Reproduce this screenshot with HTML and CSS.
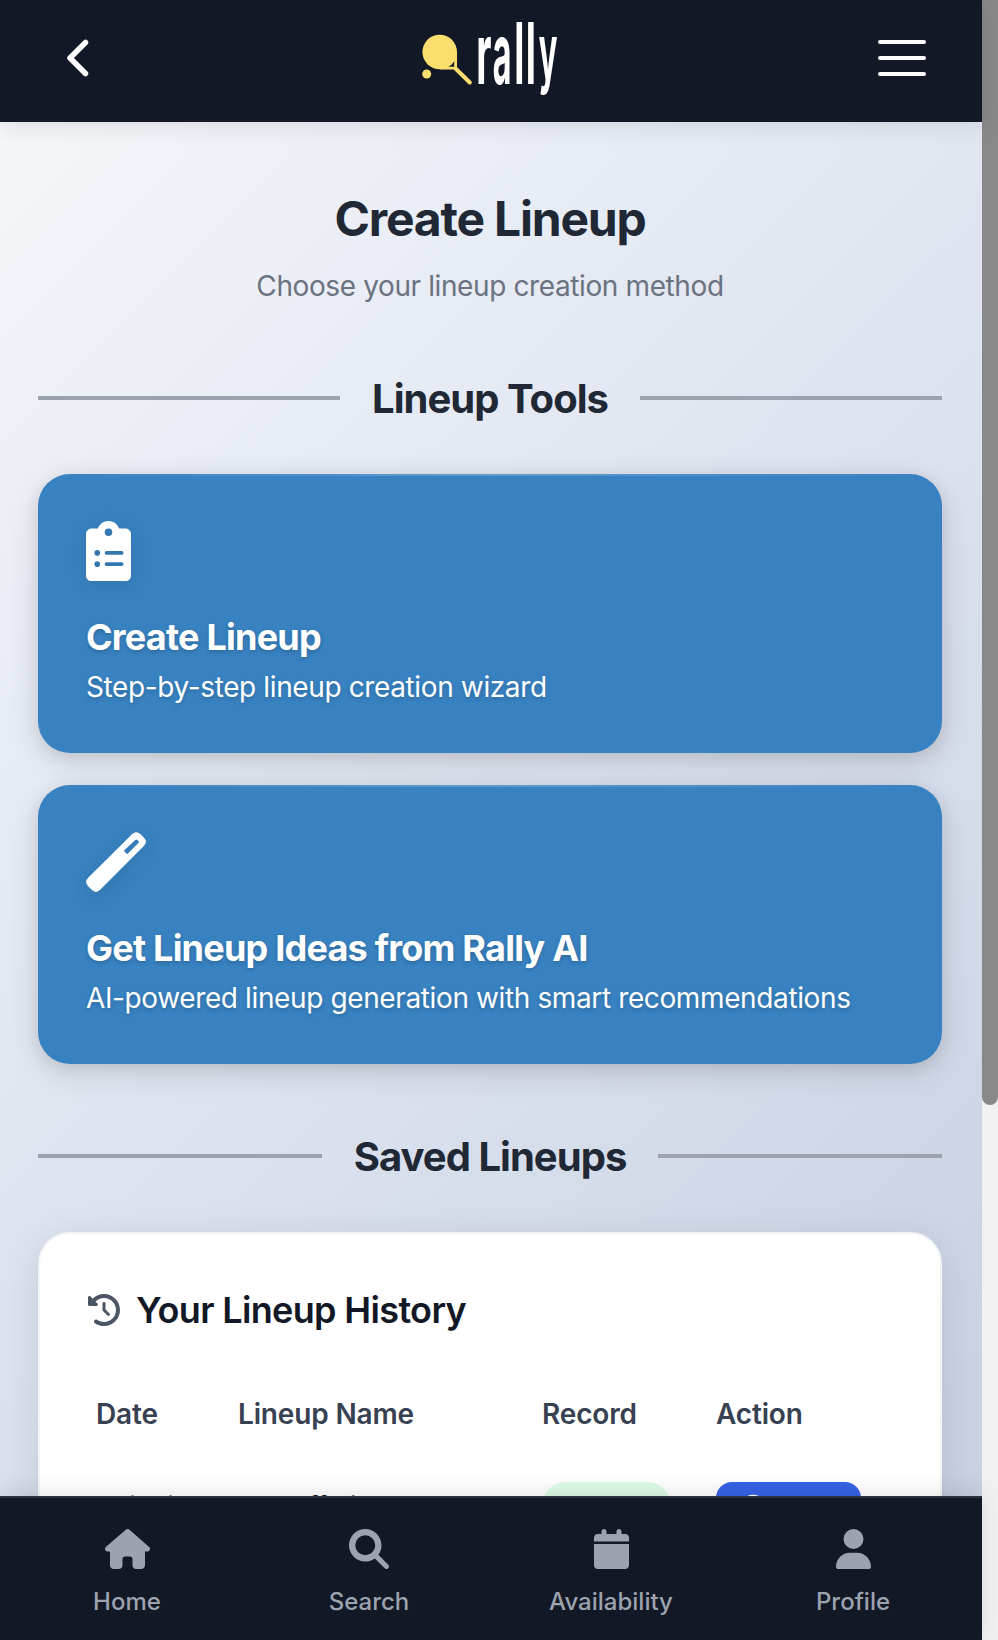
FILE: index.html
```html
<!DOCTYPE html>
<html lang="en">
<head>
<meta charset="utf-8">
<title>Create Lineup - Rally</title>
<link rel="stylesheet" href="styles.css">
</head>
<body>
<div class="screen">
<div class="app">
  <header class="topbar">
    <svg class="back" viewBox="0 0 22 38"><path d="M18.500 3.500 L3 19 L18.500 34.500"/></svg>
    <svg class="logo" viewBox="0 0 180 122" role="img" aria-label="rally">
      <circle class="gold" cx="39.700" cy="52" r="17.300"/>
      <circle class="gold" cx="26.700" cy="74" r="4.500"/>
      <path class="frame" d="M55.600 52V68.200H40"/>
      <path class="handle" d="M55.500 68.500L69.800 82.500"/>
      <g class="wordmark">
        <text transform="translate(76.300 83.500) scale(.44 1)">r</text>
        <text transform="translate(92.800 83.500) scale(.38 1)">a</text>
        <text transform="translate(114.200 83.500) scale(.44 1)">l</text>
        <text transform="translate(125.800 83.500) scale(.44 1)">l</text>
        <text transform="translate(138.700 79) scale(.365 .9)">y</text>
      </g>
    </svg>
    <div class="burger"><span></span><span></span><span></span></div>
  </header>
  <main class="content">
    <h1 class="title">Create Lineup</h1>
    <p class="subtitle">Choose your lineup creation method</p>
    <div class="divider tools"><i></i><h2>Lineup Tools</h2><i></i></div>
    <section class="card">
      <svg class="card-icon" viewBox="0 0 384 512"><path d="M192 0c-41.800 0-77.400 26.700-90.500 64H48C21.500 64 0 85.500 0 112V464c0 26.500 21.500 48 48 48H336c26.500 0 48-21.500 48-48V112c0-26.500-21.500-48-48-48H282.500C269.400 26.700 233.800 0 192 0zm0 64a32 32 0 1 1 0 64 32 32 0 1 1 0-64zM72 272a24 24 0 1 1 48 0 24 24 0 1 1-48 0zm104-16H304c8.800 0 16 7.200 16 16s-7.200 16-16 16H176c-8.800 0-16-7.200-16-16s7.200-16 16-16zM72 368a24 24 0 1 1 48 0 24 24 0 1 1-48 0zm88 0c0-8.800 7.200-16 16-16H304c8.800 0 16 7.200 16 16s-7.200 16-16 16H176c-8.800 0-16-7.200-16-16z"/></svg>
      <h3>Create Lineup</h3>
      <p>Step-by-step lineup creation wizard</p>
    </section>
    <section class="card">
      <svg class="card-icon" viewBox="0 0 60 60"><path fill-rule="evenodd" d="M46 2.200Q50.200-1.800 54.500 2.200L57.800 5.500Q62 9.800 57.800 14L14.200 57.800Q10 62 5.700 57.800L2.200 54.300Q-2 50 2.200 45.800ZM38.300 19.200L40.700 21.700Q41.300 22.200 41.900 21.600L52.400 11.100Q53.400 10 52.400 9L51.400 8Q50.400 7 49.300 8L38.300 18.200Q37.700 18.700 38.300 19.200Z"/></svg>
      <h3>Get Lineup Ideas from Rally AI</h3>
      <p>AI-powered lineup generation with smart recommendations</p>
    </section>
    <div class="divider saved"><i></i><h2>Saved Lineups</h2><i></i></div>
    <section class="history">
      <h3 class="history-title">
        <svg viewBox="0 0 512 512"><path d="M75 75L41 41C25.900 25.900 0 36.600 0 57.900V168c0 13.300 10.700 24 24 24H134.100c21.400 0 32.100-25.900 17-41l-30.800-30.800C155 85.500 203 64 256 64c106 0 192 86 192 192s-86 192-192 192c-40.800 0-78.600-12.700-109.700-34.400c-14.500-10.100-34.400-6.600-44.600 7.900s-6.600 34.400 7.900 44.600C151.200 495 201.700 512 256 512c141.400 0 256-114.600 256-256S397.400 0 256 0C185.300 0 121.300 28.700 75 75zm181 53c-13.300 0-24 10.700-24 24V256c0 6.400 2.500 12.500 7 17l72 72c9.400 9.400 24.600 9.400 33.900 0s9.400-24.600 0-33.900l-65-65V152c0-13.300-10.700-24-24-24z"/></svg>
        <span>Your Lineup History</span>
      </h3>
      <div class="row head"><span>Date</span><span>Lineup Name</span><span>Record</span><span>Action</span></div>
      <div class="row entry">
        <span>10/10/25</span>
        <span>Playoff Lineup</span>
        <span class="badge"></span>
        <span class="btn"><svg viewBox="0 0 576 512"><path d="M288 32C120 32 30 190 0 256c30 66 120 224 288 224s258-158 288-224C546 190 456 32 288 32z"/></svg></span>
      </div>
    </section>
  </main>
  <nav class="tabs">
    <a><svg viewBox="0 0 576 512"><path d="M575.800 255.500c0 18-15 32.100-32 32.100h-32V464c0 26.500-21.500 48-48 48H400c-26.500 0-48-21.500-48-48v-80c0-17.700-14.300-32-32-32h-64c-17.700 0-32 14.300-32 32v80c0 26.500-21.500 48-48 48h-64c-26.500 0-48-21.500-48-48V287.600H32c-18 0-32-14-32-32.100 0-9 3-17 10-24L266.400 8c7-7 15-8 22-8s15 2 21 7L564.800 231.500c8 7 12 15 11 24z"/></svg><span>Home</span></a>
    <a><svg viewBox="0 0 512 512"><path d="M416 208c0 45.900-14.900 88.300-40 122.700L502.600 457.400c12.500 12.500 12.500 32.800 0 45.300s-32.800 12.500-45.300 0L330.700 376c-34.400 25.200-76.800 40-122.700 40C93.100 416 0 322.900 0 208S93.100 0 208 0S416 93.100 416 208zM208 336a128 128 0 1 0 0-256 128 128 0 1 0 0 256z"/></svg><span>Search</span></a>
    <a><svg viewBox="0 0 448 512"><path d="M96 32V64H48C21.500 64 0 85.500 0 112v48H448V112c0-26.500-21.500-48-48-48H352V32c0-17.700-14.300-32-32-32s-32 14.300-32 32V64H160V32c0-17.700-14.300-32-32-32S96 14.300 96 32zM448 192H0V464c0 26.500 21.500 48 48 48H400c26.500 0 48-21.500 48-48V192z"/></svg><span>Availability</span></a>
    <a><svg viewBox="0 0 448 512"><path d="M224 256A128 128 0 1 0 224 0a128 128 0 1 0 0 256zm-45.700 48C79.800 304 0 383.800 0 482.300C0 498.700 13.300 512 29.700 512H418.300c16.400 0 29.700-13.300 29.700-29.700C448 383.800 368.200 304 269.700 304H178.300z"/></svg><span>Profile</span></a>
  </nav>
</div>
<div class="scrollbar"><div class="thumb"></div></div>
</div>
</body>
</html>
```
FILE: styles.css
```css
* { box-sizing: border-box; }
body { margin: 0; font-family: Inter, "Liberation Sans", sans-serif; }
h1, h2, h3, p { margin: 0; white-space: nowrap; }
.screen { display: flex; width: 998px; height: 1640px; overflow: hidden; background: #f0f0f0; }
.app { display: flex; flex-direction: column; width: 982px; height: 1640px; background: linear-gradient(135deg, #f7f8fa 0%, #e8ecf5 28%, #c5cfe1 100%); }
.topbar { flex: none; display: flex; justify-content: space-between; align-items: center; height: 122px; padding: 0 56px 0 67px; background: #121826; box-shadow: 0 4px 20px rgba(0, 0, 0, .1); z-index: 1; }
.back { width: 22px; height: 38px; margin: -6px 26px 0 0; fill: none; stroke: #fff; stroke-width: 5.500; stroke-linecap: round; stroke-linejoin: round; }
.logo { width: 180px; height: 122px; margin-right: 13px; }
.gold { fill: #fade6e; }
.frame { fill: none; stroke: #fade6e; stroke-width: 2.800; }
.handle { stroke: #fade6e; stroke-width: 4; stroke-linecap: round; }
.wordmark { font-size: 85px; font-weight: 700; fill: #fff; }
.burger { display: flex; flex-direction: column; gap: 12px; width: 48px; margin-top: -6px; }
.burger span { height: 4px; border-radius: 2px; background: #fff; }
.content { flex: 1; min-height: 0; overflow: hidden; padding: 67px 40px 0 38px; }
.title { height: 60px; line-height: 60px; font-size: 48px; font-weight: 700; letter-spacing: -1.200px; color: #202836; text-align: center; }
.subtitle { height: 44px; margin-top: 15px; line-height: 44px; font-size: 28px; letter-spacing: -.39px; color: #6b7280; text-align: center; }
.divider { display: flex; align-items: center; gap: 32px; height: 56px; }
.divider i { flex: 1; height: 4px; background: #9ca3af; }
.divider h2 { padding-top: 2px; line-height: 56px; font-size: 40px; font-weight: 700; letter-spacing: -.97px; color: #202836; }
.tools { margin: 62px 0 48px; }
.saved { margin: 64px 0 48px; }
.card { height: 279px; margin-bottom: 32px; padding: 47px 48px; border-radius: 32px; color: #fff; background: linear-gradient(90deg, transparent, rgba(255, 255, 255, .2), transparent) 0 0 / 100% 2px no-repeat, #3882c1; box-shadow: 0 8px 32px rgba(0, 0, 0, .12), 0 4px 16px rgba(0, 0, 0, .08); text-shadow: 0 2px 4px rgba(0, 0, 0, .2); }
.card-icon { display: block; height: 60px; fill: #fff; filter: drop-shadow(0 4px 8px rgba(0, 0, 0, .1)); }
.card h3 { margin-top: 34px; line-height: 44px; font-size: 36px; font-weight: 700; letter-spacing: -.78px; }
.card p { margin-top: 6px; line-height: 44px; font-size: 28px; letter-spacing: -.38px; }
.history { height: 600px; padding: 48px 46px; border: 2px solid #f3f4f6; border-radius: 32px; background: #fff; box-shadow: 0 8px 40px rgba(0, 0, 0, .1); }
.history-title { display: flex; align-items: center; gap: 16px; height: 56px; padding-left: 2px; font-size: 36px; font-weight: 600; letter-spacing: -.65px; color: #121826; }
.history-title svg { width: 32px; height: 32px; fill: #4b5563; }
.row { display: grid; grid-template-columns: 142px 304px 174px 1fr; padding-left: 10px; font-size: 28px; }
.head { margin-top: 56px; line-height: 40px; font-weight: 600; letter-spacing: -.15px; color: #374151; }
.entry { margin-top: 48px; line-height: 51px; letter-spacing: -.4px; color: #121826; }
.badge { width: 129px; height: 48px; border-radius: 24px; background: #dcfce7; }
.btn { display: flex; align-items: center; width: 145px; height: 52px; padding: 0 0 3px 21px; border-radius: 16px; background: #3662e6; }
.btn svg { width: 32px; height: 28px; fill: #fff; }
.tabs { flex: none; display: grid; grid-template-columns: repeat(4, 242px); height: 144px; padding: 31px 8px 0 6px; border-top: 2px solid #2a313d; background: #121826; color: #9ca3af; font-size: 24px; font-weight: 500; box-shadow: 0 -4px 20px rgba(0, 0, 0, .1); z-index: 1; }
.tabs a { display: flex; flex-direction: column; align-items: center; }
.tabs svg { height: 40px; fill: #9ca3af; }
.tabs span { margin-top: 16px; line-height: 34px; }
.scrollbar { width: 16px; background: #f1f1f1; }
.thumb { height: 1105px; border-radius: 0 0 8px 8px; background: #888; }
```
